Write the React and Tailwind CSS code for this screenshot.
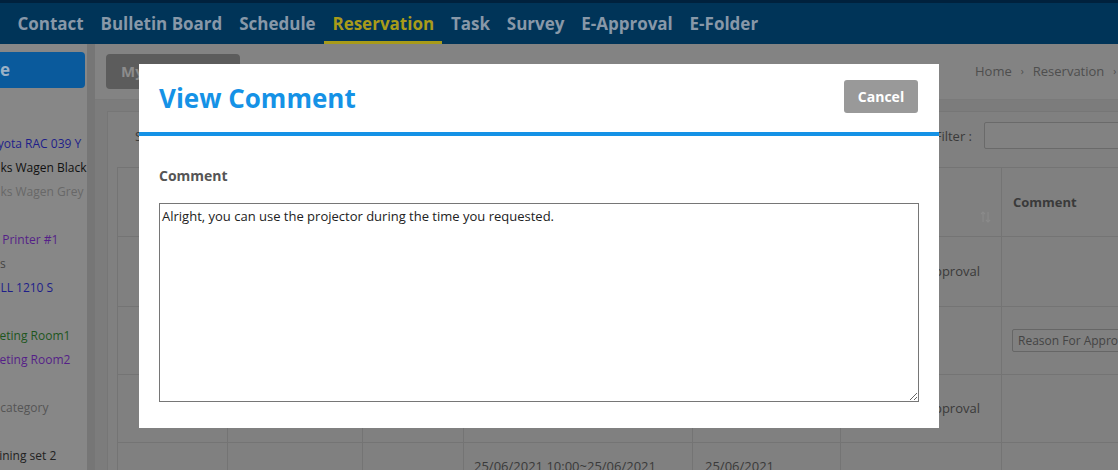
import React from "react";

const navItems = ["Contact", "Bulletin Board", "Schedule", "Reservation", "Task", "Survey", "E-Approval", "E-Folder"];

function Nav() {
  return (
    <div className="h-[44px] bg-[#003458] border-t-[3px] border-[#00213d] flex pl-[9px] shrink-0">
      {navItems.map((n) =>
        n === "Reservation" ? (
          <div key={n} className="px-[8.4px] flex items-center border-b-[3px] border-[#a89b1a] text-[#a89b1a] text-[17px] font-bold pt-[3px]">
            {n}
          </div>
        ) : (
          <div key={n} className="px-[8.4px] flex items-center border-b-[3px] border-transparent text-[#8898a8] text-[17px] font-bold pt-[3px]">
            {n}
          </div>
        )
      )}
    </div>
  );
}

function Sidebar() {
  return (
    <div className="w-[87px] shrink-0 bg-[#878787] overflow-hidden">
      <div className="mt-[8px] h-[36px] w-[85px] bg-[#0a5a9c] rounded-r-[4px] flex items-center justify-end pr-[75px] text-[17px] font-bold text-[#9bb1c6] whitespace-nowrap">
        Reserve
      </div>
      <div className="mt-[44px] flex flex-col text-[12px] whitespace-nowrap">
        <div className="h-[24px] leading-[24px] ml-[-16px] text-[#1e1e8a]">Toyota RAC 039 Y</div>
        <div className="h-[24px] leading-[24px] ml-[-17px] text-[#111]">Volks Wagen Black</div>
        <div className="h-[24px] leading-[24px] ml-[-17px] text-[#686868]">Volks Wagen Grey</div>
        <div className="h-[24px]"></div>
        <div className="h-[24px] leading-[24px] ml-[-17px] text-[#551f88]">HP Printer #1</div>
        <div className="h-[24px] leading-[24px] ml-[-24px] text-[#444]">Tools</div>
        <div className="h-[24px] leading-[24px] ml-[-15px] text-[#1e1e8a]">DELL 1210 S</div>
        <div className="h-[24px]"></div>
        <div className="h-[24px] leading-[24px] ml-[-18px] text-[#1d561d]">Meeting Room1</div>
        <div className="h-[24px] leading-[24px] ml-[-18px] text-[#551f88]">Meeting Room2</div>
        <div className="h-[24px]"></div>
        <div className="h-[24px] leading-[24px] ml-[-19px] text-[#555]">No category</div>
        <div className="h-[24px]"></div>
        <div className="h-[24px] leading-[24px] ml-[-19px] text-[#222]">Training set 2</div>
      </div>
    </div>
  );
}

const cellB = "border-r border-b border-[#747474]";

function SortIcon() {
  return (
    <svg width="11" height="12" viewBox="0 0 11 12" fill="none" stroke="#8a8a8a" strokeWidth="1.1">
      <path d="M3 11V1M1 3l2-2 2 2" />
      <path d="M8 1v10M6 9l2 2 2-2" />
    </svg>
  );
}

function Table() {
  return (
    <div className="grid grid-cols-[110px_135px_101px_229px_148px_161px_216px] border-t border-l border-[#747474] text-[13px] text-[#3a3a3a]">
      {/* header */}
      <div className={`${cellB} h-[69px]`}></div>
      <div className={`${cellB}`}></div>
      <div className={`${cellB}`}></div>
      <div className={`${cellB}`}></div>
      <div className={`${cellB}`}></div>
      <div className={`${cellB} relative`}>
        <span className="absolute right-[10px] top-[43px]">
          <SortIcon />
        </span>
      </div>
      <div className={`${cellB} flex items-center pl-[11px] pt-[2px] font-bold`}>Comment</div>
      {/* row 1 */}
      <div className={`${cellB} h-[70px]`}></div>
      <div className={`${cellB}`}></div>
      <div className={`${cellB}`}></div>
      <div className={`${cellB}`}></div>
      <div className={`${cellB}`}></div>
      <div className={`${cellB} flex items-center pl-[15px] whitespace-nowrap overflow-hidden`}>Waiting for Approval</div>
      <div className={`${cellB}`}></div>
      {/* row 2 */}
      <div className={`${cellB} h-[68px]`}></div>
      <div className={`${cellB}`}></div>
      <div className={`${cellB}`}></div>
      <div className={`${cellB}`}></div>
      <div className={`${cellB}`}></div>
      <div className={`${cellB}`}></div>
      <div className={`${cellB} flex items-center pl-[10px]`}>
        <div className="h-[23px] w-[190px] border border-[#666] rounded-[2px] flex items-center px-[5px] text-[12px] text-[#444] whitespace-nowrap">
          Reason For Approval
        </div>
      </div>
      {/* row 3 */}
      <div className={`${cellB} h-[68px]`}></div>
      <div className={`${cellB}`}></div>
      <div className={`${cellB}`}></div>
      <div className={`${cellB}`}></div>
      <div className={`${cellB}`}></div>
      <div className={`${cellB} flex items-center pl-[15px] whitespace-nowrap overflow-hidden`}>Waiting for Approval</div>
      <div className={`${cellB}`}></div>
      {/* row 4 */}
      <div className={`${cellB} h-[60px]`}></div>
      <div className={`${cellB}`}></div>
      <div className={`${cellB}`}></div>
      <div className={`${cellB} pl-[10px] pt-[14px] whitespace-nowrap`}>25/06/2021 10:00~25/06/2021</div>
      <div className={`${cellB} pl-[12px] pt-[14px]`}>25/06/2021</div>
      <div className={`${cellB}`}></div>
      <div className={`${cellB}`}></div>
    </div>
  );
}

function Main() {
  return (
    <div className="flex-1 min-w-0 bg-[#7c7c7c] flex flex-col">
      <div className="h-[56px] shrink-0 bg-[#838383] border-b border-[#7a7a7a] flex items-center">
        <div className="ml-[11px] w-[134px] h-[35px] shrink-0 rounded-[4px] bg-[#5c5c5c] flex items-center pl-[15px] text-[15px] font-bold text-[#8c8c8c] whitespace-nowrap">
          My Reservation
        </div>
        <div className="ml-[735px] shrink-0 whitespace-nowrap text-[13px] text-[#4e4e4e] flex items-center gap-[9px]">
          <span>Home</span>
          <span className="text-[10px]">›</span>
          <span>Reservation</span>
          <span className="text-[10px]">›</span>
          <span>My Reservation</span>
        </div>
      </div>
      <div className="ml-[12px] mt-[11px] w-[1120px] shrink-0 bg-[#808080] border border-[#767676] px-[9px] pt-[10px]">
        <div className="flex items-center justify-between h-[27px]">
          <div className="ml-[18px] text-[13px] text-[#3a3a3a] pt-[3px]">Show 10 entries</div>
          <div className="flex items-center gap-[12px]">
            <span className="text-[13px] text-[#3a3a3a] pt-[3px]">Filter :</span>
            <div className="w-[233px] h-[27px] border border-[#6a6a6a] rounded-[2px] bg-[#828282]"></div>
          </div>
        </div>
        <div className="mt-[18px]">
          <Table />
        </div>
      </div>
    </div>
  );
}

function Modal() {
  return (
    <div className="absolute left-[139px] top-[64px] w-[800px] bg-white">
      <div className="flex items-center justify-between h-[72px] pl-[20px] pr-[21px] border-b-4 border-[#1592e6]">
        <h2 className="text-[26px] font-bold text-[#1592e6] leading-none">View Comment</h2>
        <button className="-mt-[3px] w-[74px] h-[33px] rounded-[3px] bg-[#999999] text-white text-[14px] font-bold">Cancel</button>
      </div>
      <div className="px-[20px] pt-[30px] pb-[26px]">
        <div className="text-[14px] font-bold text-[#555] leading-[19px]">Comment</div>
        <textarea
          readOnly
          defaultValue="Alright, you can use the projector during the time you requested."
          className="mt-[18px] block w-full h-[199px] border border-[#767676] px-[2px] py-[3px] text-[13px] text-[#222] font-['Open_Sans'] outline-none"
        />
      </div>
    </div>
  );
}

export default function App() {
  return (
    <div className="relative w-[1118px] h-[470px] overflow-hidden font-['Open_Sans',sans-serif] flex flex-col bg-[#7c7c7c]">
      <Nav />
      <div className="flex flex-1 min-h-0">
        <Sidebar />
        <div className="w-[8px] shrink-0 bg-[#767676]"></div>
        <Main />
      </div>
      <Modal />
    </div>
  );
}
